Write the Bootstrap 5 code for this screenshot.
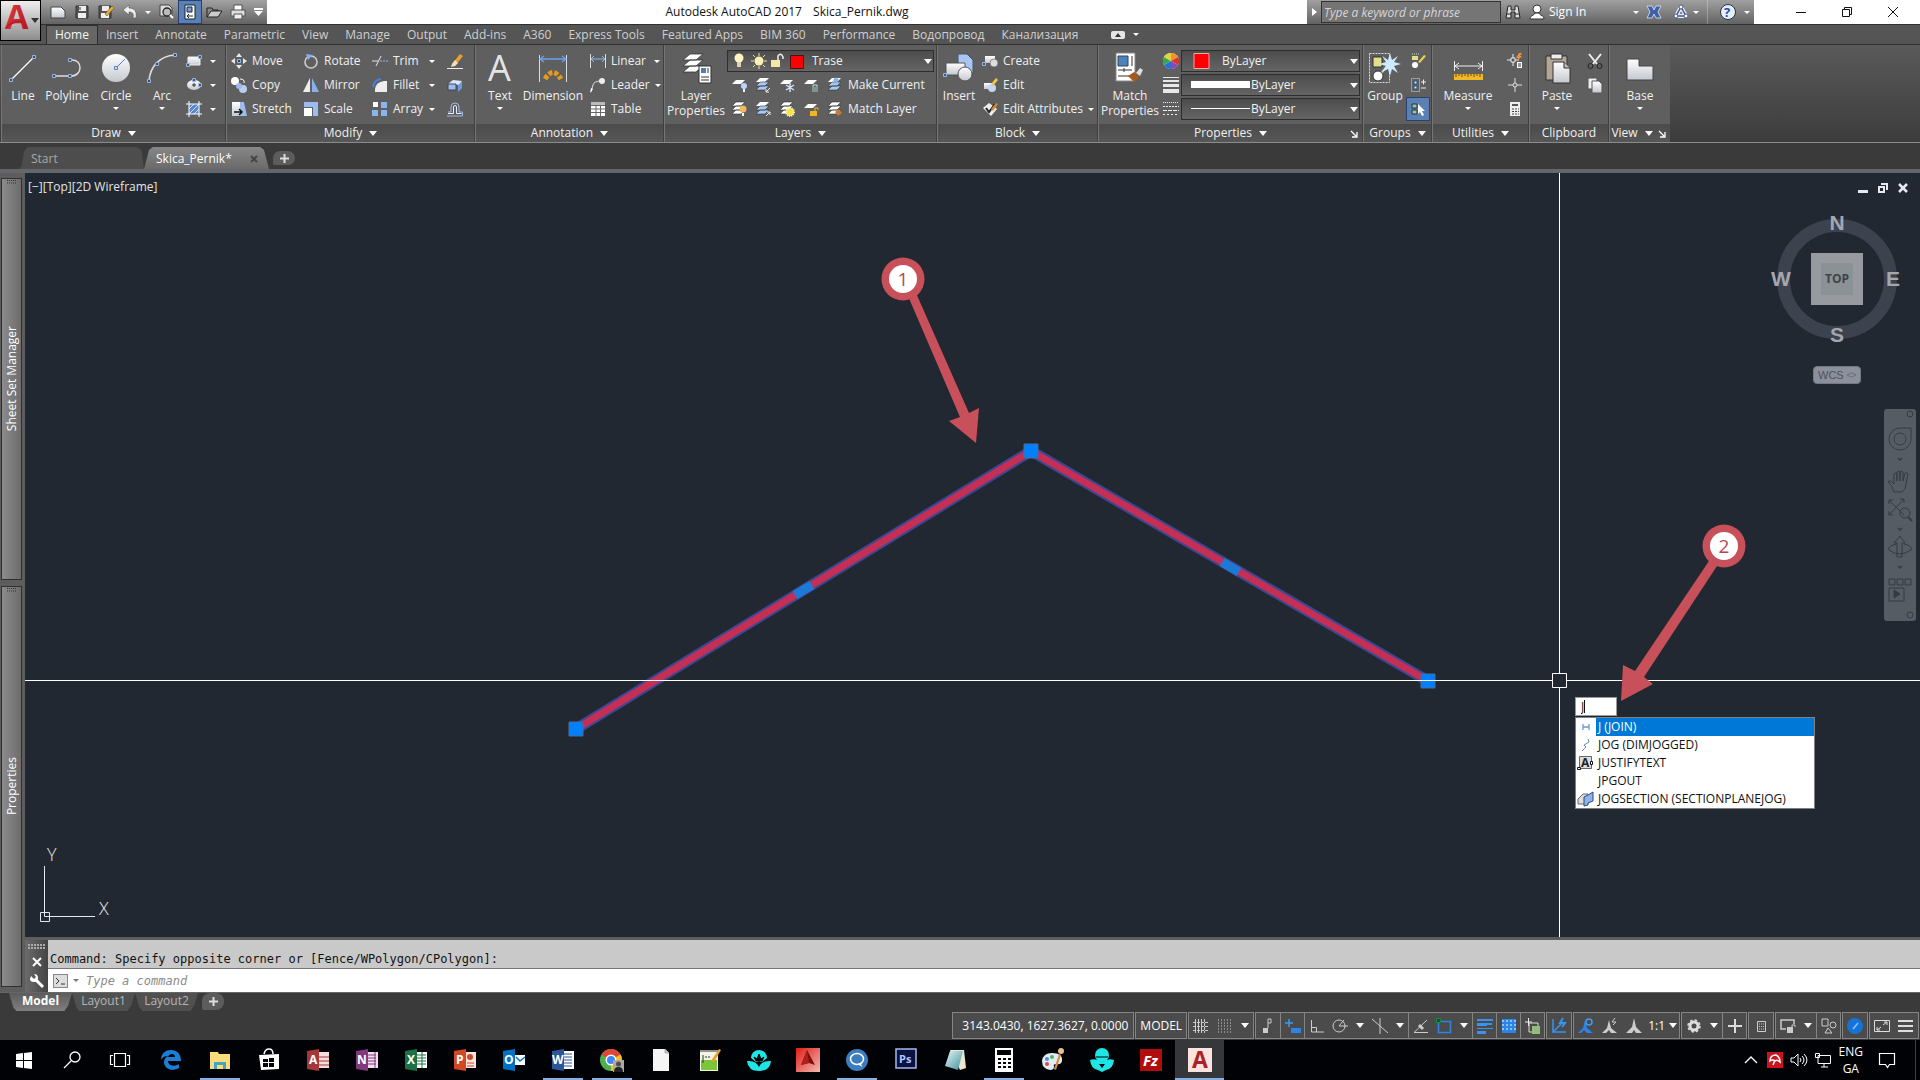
<!DOCTYPE html>
<html lang="en">
<head>
<meta charset="utf-8">
<meta name="viewport" content="width=device-width, initial-scale=1">
<title>Autodesk AutoCAD 2017 - Skica_Pernik.dwg</title>
<link href="https://cdn.jsdelivr.net/npm/bootstrap@5.3.0/dist/css/bootstrap.min.css" rel="stylesheet">
<style>
:root{--ui:"Open Sans","Noto Sans",sans-serif}
body{font-family:var(--ui);font-size:12px;line-height:16px;background:#3a3a3b;color:#f0f0f0;overflow-x:hidden}
button,select,input{font:inherit;color:inherit;background:none;border:0;padding:0;border-radius:0}
a{color:inherit;text-decoration:none}
svg{flex:none;display:block;overflow:visible}
svg text{font-family:"Open Sans",sans-serif}
.caret{flex:none;width:0;height:0;border:4px solid transparent;border-top:5px solid #fff;border-bottom:0}
.caret-s{border-width:3px;border-top-width:3px}
.ic{width:16px;height:16px}
.ibtn{display:flex;align-items:center;justify-content:center;width:24px;height:24px;flex:none}
/* title bar */
.titlebar{height:24px;background:#fff;color:#111}
.appbtn{position:absolute;left:0;top:0;width:41px;height:41px;background:linear-gradient(#eee,#8d8d8d);border:1px solid #000;z-index:5}
.qat{margin-left:41px;padding-left:5px;width:226px;background:linear-gradient(#a2a2a2,#636363)}
.qat-on{background:#5b80b4;border:1px solid #27426e}
.info-bar{background:linear-gradient(#a0a0a0,#636363);width:447px;color:#fff}
.kw{width:180px;height:22px;background:#757575;border:1px solid #333;font-style:italic;padding-left:2px}
.kw::placeholder{color:#d5d5d5;opacity:1}
.winbtn{width:46px;height:24px}
/* ribbon */
.ribbon-tabs{height:20px;background:#555556;border-top:1px solid #303030;padding-left:46px;color:#cfcfcf}
.ribbon-tabs a{padding:0 8px 0 7px;line-height:18px;border:1px solid transparent;border-bottom:0;white-space:nowrap}
.ribbon-tabs a.on{background:#666;border-color:#2e2e2e;color:#f5f5f5;padding:0 8px}
.ribbon{height:99px;background:linear-gradient(#5a5a5a,#3c3c3c);border-top:1px solid #303030;border-bottom:1px solid #8b8b8b;padding-left:1px}
.pnl{display:flex;flex-direction:column;background:#5f5f60;border-right:1px solid #404040;border-left:1px solid #757575;flex:none}
.pnl-body{flex:1;display:flex;padding-top:4px}
.pnl-title{height:18px;background:linear-gradient(#4b4b4b,#575757);display:flex;align-items:center;justify-content:center;gap:7px;position:relative}
.launch{position:absolute;right:4px;top:6px}
.big{display:flex;flex-direction:column;align-items:center;flex:none;line-height:15px;padding-top:3px}
.big svg{width:32px;height:32px;margin-bottom:4px}
.big .caret{margin-top:4px}
.rows{display:flex;flex-direction:column;flex:none}
.rb{display:flex;align-items:center;height:24px;gap:5px;white-space:nowrap}
.rb .caret{margin-left:auto}
.combo{display:flex;align-items:center;height:22px;margin:1px 0;background:linear-gradient(#4d4d4d,#646464);border:1px solid #2d2d2d;position:relative}
.combo select{appearance:none;flex:1;min-width:0;height:20px}
.combo .caret{position:absolute;right:1px;pointer-events:none}
.combos{margin-right:2px}
.w-draw{width:225px}.w-modify{width:249px}.w-annot{width:189px}.w-layers{width:273px}.w-block{width:161px}
.w-props{width:265px}.w-groups{width:69px}.w-utils{width:97px}.w-clip{width:80px}.w-view{width:61px}
/* file tabs */
.filetabs{height:26px;background:#3a3a3a;padding:4px 0 0 19px}
.ftab{height:22px;width:125px;padding:2px 14px 0 12px;display:flex;align-items:center;background:#4d4d4d;color:#a9a9a9;
clip-path:polygon(0 100%,2% 88%,4% 20%,7% 0,94% 0,98% 14%,100% 100%)}
.ftab.on{background:linear-gradient(#878787,#6a6a6a);color:#fff;padding-right:11px;clip-path:polygon(0 100%,4% 14%,7% 0,93% 0,96% 14%,100% 100%)}
.plus-tab{width:22px;height:14px;background:#5c5c5c;border-radius:8px 8px 8px 2px;display:flex;align-items:center;justify-content:center}
.rule{height:4px;background:#66656b;flex:none}
/* work area */
.side{width:25px;background:#5d5d5e;padding:5px 2px 5px 1px;gap:6px;flex:none}
.palette{flex:1;width:21px;border:1px solid #2f2f2f;background:linear-gradient(90deg,#8c8c8c,#6c6c6c);color:#fff;position:relative;
display:flex;align-items:center;justify-content:center}
.palette span{writing-mode:vertical-rl;transform:rotate(180deg);white-space:nowrap}
.palette svg{position:absolute;top:1px;left:5px}
.model{background:#212831;position:relative;flex:1;min-height:640px;overflow:hidden}
.drawing{position:absolute;left:0;top:0;width:100%;height:100%}
.vlabel{position:absolute;left:3px;top:6px;color:#e4e4e4}
.vpbtns{position:absolute;right:12px;top:10px;display:flex;gap:10px}
.viewcube{position:absolute;right:18px;top:36px}
.ucs{position:absolute;left:10px;bottom:10px}
.wcs{position:absolute;right:59px;top:193px;width:48px;height:18px;border-radius:4px;background:#8b909c;border:1px solid #737882;color:#4d525b;
font-family:"Liberation Sans",sans-serif;font-size:11px;line-height:14px;display:flex;align-items:center;justify-content:space-between;padding:0 4px}
.navbar-v{position:absolute;right:4px;top:236px;width:32px;height:212px;border-radius:3px;background:#565c64}
.dyn{position:absolute;left:1550px;top:524px;width:240px;color:#111}
.dyn input{display:block;width:42px;height:19px;background:#fff;padding-left:5px;border:1px solid #999;line-height:16px}
.dyn-cursor{position:absolute;left:9px;top:3px;width:1px;height:13px;background:#111}
.dyn ul{border:1px solid #808080;background:#fff;margin:1px 0 0}
.dyn li{height:18px;display:flex;align-items:center;line-height:18px}
.dyn li svg{width:20px;height:18px}
.dyn li span{flex:1;padding-left:2px;white-space:nowrap}
.dyn li.sel span{background:#0078d7;color:#fff}
/* command line */
.cmd{border-top:3px solid #5d5d60;font-family:"DejaVu Sans Mono","Liberation Mono",monospace;color:#111;flex:none}
.cmd-grip{width:23px;background:linear-gradient(90deg,#6b6b6b,#444)}
.cmd-hist{height:29px;background:#c9c9c9;border-bottom:1px solid #777;padding:11px 2px 0;line-height:16px}
.cmd-in{height:23px;background:#fff;padding-left:5px;gap:5px}
.cmd-in input{font-style:italic;padding-left:2px}
.cmd-in input::placeholder{color:#8b8b8b;opacity:1}
/* layout tabs and status bar */
.laytabs{height:20px;border-top:1px solid #666;padding-left:9px;color:#b5b5b5}
.ltab{height:18px;width:63px;background:#505050;line-height:16px;padding-bottom:2px;text-align:center;clip-path:polygon(0 0,100% 0,94% 70%,88% 100%,12% 100%,7% 80%)}
.ltab.on{background:linear-gradient(#5c5c5c,#7f7f7f);color:#fff;font-weight:700}
.status{height:28px;padding:0 1px 1px 0;gap:1px}
.sg{display:flex;align-items:center;height:27px;border:1px solid #858585;background:#4b4b4c;color:#fff}
.sg .ibtn{height:25px}
.sg .ibtn+.cell,.cell+.cell{border-left:1px solid #858585}
.sg .sm{width:16px}
.scale-btn{display:flex;align-items:center;gap:4px;padding:0 2px}
.coord{width:182px;padding-right:5px;justify-content:flex-end}
/* taskbar */
.taskbar{height:40px;background:#010206;color:#fff}
.tk{width:49px;height:40px;display:flex;align-items:center;justify-content:center;position:relative;flex:none}
.tk.sys{width:48px}
.tk.sys+.tk:not(.sys){margin-left:2px}
.tk svg{width:24px;height:24px}
.tk.run::after{content:"";position:absolute;left:5px;right:4px;bottom:0;height:2px;background:#84b0e4}
.tk.act{background:#36373b}
.tk.act::after{left:0;right:0}
.tray{padding-right:4px}
</style>
</head>
<body>
<svg width="0" height="0" class="position-absolute" aria-hidden="true">
<defs>
<linearGradient id="gw" x2="0" y2="1"><stop stop-color="#fff"/><stop offset="1" stop-color="#c4c8cf"/></linearGradient>
<linearGradient id="gr" x1="0" x2="1" y2="1"><stop stop-color="#e01c14"/><stop offset="1" stop-color="#f3b9b4"/></linearGradient>
<linearGradient id="gt" x2="1" y2="1"><stop stop-color="#e4f6f4"/><stop offset="1" stop-color="#3f8f9c"/></linearGradient>
<linearGradient id="ga" x2="1" y2="1"><stop stop-color="#e8434a"/><stop offset="1" stop-color="#a81218"/></linearGradient>
<symbol id="stack" viewBox="0 0 16 16"><path d="M5 1h9l-4 4H1zM5 5h9l-4 4H1zM5 9h9l-4 4H1z" fill="#fff" stroke="#333" stroke-width=".6"/></symbol>
<symbol id="stackb" viewBox="0 0 16 16"><path d="M5 1h9l-4 4H1z" fill="#fff"/><path d="M5 5h9l-4 4H1zM5 9h9l-4 4H1z" fill="#a9c9f5" stroke="#333" stroke-width=".6"/></symbol>
<symbol id="one" viewBox="0 0 16 16"><path d="M5 3h9l-4 4H1z" fill="#fff"/></symbol>
<symbol id="office" viewBox="0 0 24 24"><path d="M1 3 13 1v22L1 21z"/></symbol>
</defs>
</svg>
<div class="d-flex flex-column min-vh-100">
<header>
<div class="titlebar d-flex align-items-stretch">
  <button class="appbtn d-flex align-items-center justify-content-center" aria-label="Application menu">
    <svg width="39" height="39"><text x="4" y="28" font-size="34" font-weight="700" fill="url(#ga)">A</text><path d="M5 27q6-8 19-6" fill="none" stroke="#c01a20" stroke-width="2"/><path d="M30 17h8l-4 5z" fill="#333"/></svg>
  </button>
  <div class="qat d-flex align-items-center">
    <button class="ibtn" aria-label="New"><svg class="ic"><path d="M1 3h10l4 4v7H1z" fill="url(#gw)" stroke="#444"/></svg></button>
    <button class="ibtn" aria-label="Save"><svg class="ic"><path d="M2 2h12v12H2z" fill="#555" stroke="#333"/><path d="M5 2h7v5H5zM4 9h8v5H4z" fill="#eee"/><path d="M6 3v3" stroke="#333"/></svg></button>
    <button class="ibtn" aria-label="Save as"><svg class="ic"><path d="M1 2h12v12H1z" fill="#555" stroke="#333"/><path d="M4 2h7v5H4zM3 9h8v5H3z" fill="#eee"/><path d="m7 10 7-8 2 2-7 8z" fill="#e9b340" stroke="#7a4b12" stroke-width=".6"/></svg></button>
    <button class="ibtn" aria-label="Undo"><svg class="ic"><path d="m1 6 6-5v3c6 0 8 4 7 10h-3c1-4 0-6-4-6v3z" fill="#eee" stroke="#555" stroke-width=".6"/></svg></button>
    <button class="ibtn" style="width:12px" aria-label="Undo list"><span class="caret caret-s"></span></button>
    <button class="ibtn" aria-label="Plot preview"><svg class="ic"><path d="M2 1h9l3 3v8H2z" fill="#ddd" stroke="#444"/><circle cx="9" cy="8" r="4" fill="#bbb" stroke="#222" stroke-width="1.3"/><path d="m12 11 3 3" stroke="#fff" stroke-width="2"/></svg></button>
    <button class="ibtn qat-on" aria-label="Properties"><svg class="ic"><path d="M3 1h10v14H3z" fill="#fff" stroke="#123"/><path d="M5 3h5v5H5z" fill="#6da0d6" stroke="#223"/><path d="M5 12h6M7 10l-2 2 2 2" stroke="#223" fill="none"/></svg></button>
    <button class="ibtn" aria-label="Open"><svg class="ic"><path d="M1 13V4h5l1 2h5v2H6z" fill="#888" stroke="#222"/><path d="m1 13 4-6h11l-4 6z" fill="#ccc" stroke="#222"/></svg></button>
    <button class="ibtn" aria-label="Plot"><svg class="ic"><path d="M4 1h8v6H4z" fill="#fff" stroke="#555"/><path d="M1 6h14v6H1z" fill="#ddd" stroke="#555"/><path d="M4 10h8v5H4z" fill="#eee" stroke="#555"/></svg></button>
    <button class="ibtn" style="width:16px" aria-label="Customize"><svg width="9" height="8"><path d="M0 0h9v2H0zM0 3h9L4.500 8z" fill="#fff"/></svg></button>
  </div>
  <div class="flex-fill d-flex align-items-center justify-content-center text-nowrap gap-2"><span>Autodesk AutoCAD 2017</span><span>&nbsp;Skica_Pernik.dwg</span></div>
  <div class="info-bar d-flex align-items-center">
    <button class="ibtn" style="width:14px" aria-label="Collapse"><svg width="5" height="8"><path d="M0 0l5 4-5 4z" fill="#fff"/></svg></button>
    <input class="kw" aria-label="Search" placeholder="Type a keyword or phrase">
    <button class="ibtn" aria-label="Search"><svg class="ic"><path d="M3 2h3v4h4V2h3l2 12h-5V8H6v6H1z" fill="#ddd" stroke="#222"/><path d="M2 10h4M10 10h4" stroke="#222"/></svg></button>
    <button class="d-flex align-items-center gap-1 flex-fill ps-1" aria-label="Sign In"><svg class="ic"><circle cx="8" cy="5" r="4" fill="#fff" stroke="#333"/><path d="M1 15c0-4 4-3 5-6h4c1 3 5 2 5 6z" fill="#fff" stroke="#333"/></svg><span>Sign In</span><span class="caret caret-s ms-auto"></span></button>
    <button class="ibtn" style="width:30px" aria-label="Exchange apps"><svg class="ic"><path d="M1 2h5l2 4 2-4h5l-3 6 3 6h-5l-2-4-2 4H1l3-6z" fill="#3f5fa8" stroke="#e0e6f4" stroke-width=".8"/></svg></button>
    <button class="ibtn" aria-label="A360"><svg class="ic"><path d="m8 3 5 9H3z" fill="none" stroke="#e8ecf6" stroke-width="4" stroke-linejoin="round"/><path d="m8 3 5 9H3z" fill="none" stroke="#44568c" stroke-width="1.500"/><g fill="#fff" stroke="#44568c"><circle cx="8" cy="3" r="2"/><circle cx="3" cy="12" r="2"/><circle cx="13" cy="12" r="2"/></g></svg></button>
    <span class="caret caret-s"></span>
    <span class="vr mx-2"></span>
    <button class="ibtn" aria-label="Help"><svg class="ic"><circle cx="8" cy="8" r="7.500" fill="#e7eefb" stroke="#333"/><text x="4" y="13" font-size="13" font-weight="700" fill="#1c4fb4">?</text></svg></button>
    <span class="caret caret-s mx-1"></span>
  </div>
  <div class="d-flex ps-4 pe-1">
    <button class="winbtn ibtn" aria-label="Minimize"><svg width="10" height="10"><path d="M0 5.500h10" stroke="#111"/></svg></button>
    <button class="winbtn ibtn" aria-label="Restore"><svg width="10" height="10"><path d="M.5 2.500h7v7h-7zM2.500 2.500v-2h7v7h-2" fill="none" stroke="#111"/></svg></button>
    <button class="winbtn ibtn" aria-label="Close"><svg width="10" height="10"><path d="m0 0 10 10M10 0 0 10" stroke="#111"/></svg></button>
  </div>
</div>
<nav class="ribbon-tabs d-flex">
  <a href="#" class="on">Home</a><a href="#">Insert</a><a href="#">Annotate</a><a href="#">Parametric</a><a href="#">View</a><a href="#">Manage</a><a href="#">Output</a><a href="#">Add-ins</a><a href="#">A360</a><a href="#">Express Tools</a><a href="#">Featured Apps</a><a href="#">BIM 360</a><a href="#">Performance</a><a href="#">Водопровод</a><a href="#">Канализация</a>
  <button class="d-flex align-items-center gap-2 ms-4" aria-label="Ribbon display"><svg width="14" height="8"><rect width="14" height="8" rx="2" fill="#e6e6e6"/><path d="m4 6 3-4 3 4z" fill="#333"/></svg><span class="caret caret-s"></span></button>
</nav>
<div class="ribbon d-flex">
  <section class="pnl w-draw"><div class="pnl-body">
    <button class="big" style="width:42px"><svg><path d="M4 28 27 5" stroke="#fff" stroke-width="1.300"/><g fill="#4a4a4a" stroke="#8fb7f2"><path d="M2.500 26.500h3v3h-3zM25.500 3.500h3v3h-3z"/></g></svg>Line</button>
    <button class="big" style="width:46px"><svg><path d="M3 24h17c12 0 12-17 0-16" fill="none" stroke="#ddd" stroke-width="1.500"/><g fill="#4a4a4a" stroke="#8fb7f2"><path d="M1.500 22.500h3v3h-3zM17.500 22.500h3v3h-3zM17.500 6.500h3v3h-3z"/></g></svg>Polyline</button>
    <button class="big" style="width:52px"><svg><circle cx="16" cy="16" r="14" fill="url(#gw)"/><path d="m16 16 9-9" stroke="#4d7fd0"/><path d="M14.500 14.500h3v3h-3z" fill="#dde" stroke="#4d7fd0"/></svg>Circle<span class="caret caret-s"></span></button>
    <button class="big" style="width:40px"><svg><path d="M3 29C4 15 13 4 29 3" fill="none" stroke="#ddd" stroke-width="1.500"/><g fill="#4a4a4a" stroke="#8fb7f2"><path d="M1.500 27.500h3v3h-3zM9.500 10.500h3v3h-3zM27.500 1.500h3v3h-3z"/></g></svg>Arc<span class="caret caret-s"></span></button>
    <div class="rows ps-1">
      <button class="rb" style="width:30px" aria-label="Rectangle"><svg class="ic"><path d="M2 4h12v8H2z" fill="url(#gw)" stroke="#eee"/><path d="M.5 10.500h3v3h-3zM12.500 2.500h3v3h-3z" fill="#555" stroke="#8fb7f2"/></svg><span class="caret caret-s"></span></button>
      <button class="rb" style="width:30px" aria-label="Ellipse"><svg class="ic"><ellipse cx="8" cy="8" rx="7" ry="5" fill="url(#gw)"/><path d="M8 6v4M6 8h4" stroke="#333"/><path d="M6.500 1.500h3v3h-3zM12.500 6.500h3v3h-3z" fill="#555" stroke="#8fb7f2"/></svg><span class="caret caret-s"></span></button>
      <button class="rb" style="width:30px" aria-label="Hatch"><svg class="ic"><path d="M3 3h10v10H3z" fill="#5b86cf"/><path d="m3 13 10-10M3 8l5-5M8 13l5-5" stroke="#cfe0fa"/><path d="M0 3h16M0 13h16M3 0v16M13 0v16" stroke="#fff"/></svg><span class="caret caret-s"></span></button>
    </div></div><div class="pnl-title">Draw<span class="caret"></span></div></section>

  <section class="pnl w-modify"><div class="pnl-body ps-1">
    <div class="rows" style="width:72px">
      <button class="rb"><svg class="ic"><path d="m8 0 3 4H5zM8 16l3-4H5zM0 8l4-3v6zM16 8l-4-3v6z" fill="#e8e8e8"/><path d="M6.500 6.500h3v3h-3z" fill="#444" stroke="#8fb7f2"/></svg>Move</button>
      <button class="rb"><svg class="ic"><circle cx="4" cy="4" r="4" fill="#fff"/><circle cx="12" cy="12" r="4" fill="#b9cdf0"/><circle cx="8" cy="9" r="3" fill="#9db9e8"/><path d="M9 2q5 0 4 4" stroke="#fff" fill="none"/></svg>Copy</button>
      <button class="rb"><svg class="ic"><path d="M9 1h4l3 14H9z" fill="#9cbcf0"/><path d="M1 1h8v14H1z" fill="url(#gw)"/><path d="M3 11h7M8 8l3 3-3 3" stroke="#111" stroke-width="1.500" fill="none"/></svg>Stretch</button></div>
    <div class="rows" style="width:69px">
      <button class="rb"><svg class="ic"><circle cx="8" cy="9" r="6" fill="none" stroke="#ccc" stroke-width="1.600"/><path d="m3 1 7 1-5 5z" fill="#86aff0"/></svg>Rotate</button>
      <button class="rb"><svg class="ic"><path d="M7 1v14H0z" fill="#eee"/><path d="M9 1v14h7z" fill="#8ab0ea"/></svg>Mirror</button>
      <button class="rb"><svg class="ic"><path d="M1 1h14v14h-5V6H1z" fill="#9cbcf0"/><path d="M1 7h8v8H1z" fill="#fff"/></svg>Scale</button></div>
    <div class="rows" style="width:63px">
      <button class="rb"><svg class="ic"><path d="M0 8h6M4 13l5-10" stroke="#e8e8e8"/><path d="M8 8h2m1 0h2m1 0h2" stroke="#8fb7f2"/></svg>Trim<span class="caret caret-s"></span></button>
      <button class="rb"><svg class="ic"><path d="M3 15V12Q4 5 12 4h3v11z" fill="#eee"/><path d="M1 10Q2 3 9 2" stroke="#4a7fd8" fill="none" stroke-width="2"/></svg>Fillet<span class="caret caret-s"></span></button>
      <button class="rb"><svg class="ic"><path d="M1 1h5v5H1z" fill="#fff"/><path d="M9 1h6v6H9zM0 9h6v6H0zM9 9h6v6H9z" fill="#8ab6ee"/></svg>Array<span class="caret caret-s"></span></button></div>
    <div class="rows ps-2 ms-1">
      <button class="rb" aria-label="Erase"><svg class="ic"><path d="m5 11 8-10 3 2-8 10z" fill="#e8a02c"/><path d="m5 11 3-4 3 3-3 3-4 1z" fill="#f3e0bb"/><path d="M0 15.500h16" stroke="#eee"/></svg></button>
      <button class="rb" aria-label="Explode"><svg class="ic"><path d="m1 7 5-4 9 1-3 4z" fill="#dbe8fb"/><path d="M1 7h8v6H1z" fill="#9cbcf0" stroke="#445"/><path d="m11 8 4-3v6l-4 4z" fill="#6b9be0"/></svg></button>
      <button class="rb" aria-label="Offset"><svg class="ic"><path d="M0 15h15.500v-4H12V6a4 4 0 0 0-8 0v5H1" fill="none" stroke="#9cbcf0"/><path d="M1 12.500h5.500V6a1.500 1.500 0 0 1 3 0v6.500h5" fill="none" stroke="#eee"/></svg></button></div>
  </div><div class="pnl-title">Modify<span class="caret"></span></div></section>

  <section class="pnl w-annot"><div class="pnl-body">
    <button class="big" style="width:48px"><svg><text x="4" y="29" font-size="36" fill="#e4e4e4">A</text></svg>Text<span class="caret caret-s"></span></button>
    <button class="big" style="width:58px"><svg><path d="M2.500 3v27M29.500 3v27" stroke="#ddd"/><path d="M3 7h26M7 4 3 7l4 3M25 4l4 3-4 3" stroke="#6f9fee" fill="none" stroke-width="1.300"/><path d="M8 27q8-13 16 0" fill="none" stroke="#e59a20" stroke-width="5" stroke-dasharray="4 2"/></svg>Dimension</button>
    <div class="rows ps-2" style="width:78px">
      <button class="rb"><svg class="ic"><path d="M.5 1v14M15.500 1v14" stroke="#ddd"/><path d="M1 6h14M4 3 1 6l3 3M12 3l3 3-3 3" stroke="#8fb7f2" fill="none"/></svg>Linear<span class="caret caret-s"></span></button>
      <button class="rb"><svg class="ic"><path d="M1 15 3 8q1-4 8-4" stroke="#ddd" fill="none"/><path d="m0 16 1-5 2 1z" fill="#fff"/><circle cx="12" cy="4" r="3" fill="#eee"/></svg>Leader<span class="caret caret-s"></span></button>
      <button class="rb"><svg class="ic"><path d="M1 1h14v14H1z" fill="#fff"/><path d="M1 1h14v3H1z" fill="#bbb"/><path d="M1 4.500h14M1 8h14M1 11.500h14M6 4v11M10.500 4v11" stroke="#666"/></svg>Table</button></div>
  </div><div class="pnl-title">Annotation<span class="caret"></span></div></section>

  <section class="pnl w-layers"><div class="pnl-body">
    <button class="big" style="width:62px"><svg><path d="M10 2h13l-7 6H3zM10 8h13l-7 6H3zM10 14h13l-7 6H3z" fill="#fff" stroke="#333" stroke-width=".8"/><path d="M19 14h12v17H19z" fill="#fff" stroke="#333"/><path d="M21 16h5v5h-5z" fill="#4f7db8"/><path d="M21 25h8M21 28h8M28 16v5" stroke="#333"/></svg>Layer<br>Properties</button>
    <div class="rows flex-fill combos">
      <div class="combo"><svg width="76" height="20"><circle cx="11" cy="7" r="4.500" fill="#fdf3c4"/><path d="M9 11h4v5H9z" fill="#ddd6b0"/><circle cx="31" cy="10" r="4.500" fill="#fbf0b5"/><path d="M31 2v3M31 15v3M23 10h3M36 10h3M25 4l2 2M35 14l2 2M25 16l2-2M35 6l2-2" stroke="#eee0a0"/><path d="M43 9h9v7h-9z" fill="#f6e7a2"/><path d="M50 9V5q3-4 5 1v2" fill="none" stroke="#eee" stroke-width="1.500"/><path d="M62.500 4.500h13v13h-13z" fill="#f00" stroke="#501010"/></svg><select class="ps-2" aria-label="Layer"><option>Trase</option></select><span class="caret"></span></div>
      <div class="rb ps-1" style="gap:8px"><svg class="ic"><use href="#one"/><circle cx="13" cy="9" r="3" fill="#bcd6fa"/><path d="M12 12h2v3h-2z" fill="#fff"/></svg><svg class="ic"><use href="#stackb"/><path d="m15 11-4 4m0-3v3h3" stroke="#eee" fill="none"/></svg><svg class="ic"><use href="#one"/><path d="M11 6v9M7 8l8 5M15 8l-8 5" stroke="#d5e6ff" stroke-width="1.400"/></svg><svg class="ic"><use href="#one"/><path d="M9 10h6v5H9z" fill="#7c9a8c"/><path d="M10 10V8h4v2" fill="none" stroke="#cde"/></svg><button class="rb"><svg class="ic"><use href="#stackb"/><circle cx="9" cy="3" r="2.500" fill="#8ab6ee"/></svg>Make Current</button></div>
      <div class="rb ps-1" style="gap:8px"><svg class="ic"><use href="#stack"/><circle cx="12" cy="8" r="3.500" fill="#f3b960"/><path d="M11 12h2v3h-2z" fill="#fff"/></svg><svg class="ic"><use href="#stackb"/><path d="m11 15 4-4m-3 0h3v3" stroke="#eee" fill="none"/></svg><svg class="ic"><use href="#stack"/><circle cx="11" cy="11" r="4" fill="#f5e14e" stroke="#fff8b0" stroke-dasharray="1 1" stroke-width="2"/></svg><svg class="ic"><use href="#one"/><path d="M7 10h7v5H7z" fill="#f0b429"/><path d="M12 10V7h3v2" fill="none" stroke="#f0b429"/></svg><button class="rb"><svg class="ic"><use href="#stack"/><path d="m8 11 4-3 3 4-4 3z" fill="#c77a33"/></svg>Match Layer</button></div>
    </div></div><div class="pnl-title">Layers<span class="caret"></span></div></section>

  <section class="pnl w-block"><div class="pnl-body">
    <button class="big" style="width:42px"><svg><path d="M15 2h9l6 6v13H15z" fill="#a9c6f2" stroke="#456"/><path d="M3 11h19v12H3z" fill="url(#gw)" stroke="#555"/><circle cx="22" cy="22" r="7" fill="url(#gw)" stroke="#555"/><path d="M.5 21.500h3v3h-3z" fill="#555" stroke="#8fb7f2"/></svg>Insert</button>
    <div class="rows" style="width:113px;padding-left:2px">
      <button class="rb"><svg class="ic"><path d="M3 3h10v7H3z" fill="url(#gw)"/><circle cx="12" cy="10" r="4" fill="#ddd" stroke="#555" stroke-width=".6"/><path d="M.5 9.500h3v3h-3z" fill="#555" stroke="#8fb7f2"/></svg>Create</button>
      <button class="rb"><svg class="ic"><path d="M2 6h9v6H2z" fill="url(#gw)"/><circle cx="10" cy="11" r="4" fill="#c5d6f2"/><path d="m9 7 5-6 2 2-5 6z" fill="#f2c54b"/></svg>Edit</button>
      <button class="rb"><svg class="ic"><path d="m1 7 6-5 8 6-6 7z" fill="#eee"/><path d="m4 7 3 4 6-8" stroke="#222" stroke-width="2" fill="none"/><path d="m9 8 5-6 2 1-5 7z" fill="#d58c38"/></svg>Edit Attributes<span class="caret caret-s"></span></button></div>
  </div><div class="pnl-title">Block<span class="caret"></span></div></section>

  <section class="pnl w-props"><div class="pnl-body">
    <button class="big" style="width:62px"><svg><path d="M2 1h19v28H2z" fill="#fff" stroke="#888"/><path d="M4 4h10v10H4z" fill="#4c83bd" stroke="#345"/><path d="M18 4v10M4 18h14M4 24h12M10 16v4" stroke="#333"/><path d="m14 24 6-4 6 5-6 5z" fill="#a35a20"/><path d="m22 21 4-5 3 2-3 6z" fill="#ddd"/></svg>Match<br>Properties</button>
    <div class="rows align-items-center" style="width:20px">
      <span class="rb"><svg class="ic"><circle cx="8" cy="8" r="8" fill="#eee"/><path d="M8 8V0a8 8 0 0 1 7 4z" fill="#f0932c"/><path d="m8 8 7-4a8 8 0 0 1 0 8z" fill="#d9372b"/><path d="m8 8 7 4a8 8 0 0 1-7 4z" fill="#8a49b8"/><path d="M8 8v8a8 8 0 0 1-7-4z" fill="#2c6fd3"/><path d="m8 8-7 4a8 8 0 0 1 0-8z" fill="#36a852"/><path d="M8 8 1 4a8 8 0 0 1 7-4z" fill="#e4d43c"/></svg></span>
      <span class="rb"><svg class="ic"><path d="M0 0h16v1H0zM0 3h16v2H0zM0 7h16v3H0zM0 12h16v4H0z" fill="#e8e8e8"/></svg></span>
      <span class="rb"><svg class="ic"><path d="M0 1.500h16" stroke="#eee" stroke-dasharray="1 1"/><path d="M0 5.500h16" stroke="#eee" stroke-dasharray="2 1"/><path d="M0 9.500h16" stroke="#eee" stroke-dasharray="4 1"/><path d="M0 13.500h16" stroke="#eee" stroke-dasharray="2 2"/></svg></span></div>
    <div class="rows flex-fill combos">
      <div class="combo"><svg width="28" height="20"><path d="M12 2.500h15v15H12z" fill="#f00" stroke="#eaa"/></svg><select class="ps-2 ms-1" aria-label="Color"><option>ByLayer</option></select><span class="caret"></span></div>
      <div class="combo"><svg width="69" height="20"><path d="M9 6h59v7H9z" fill="#fff"/></svg><select aria-label="Lineweight"><option>ByLayer</option></select><span class="caret"></span></div>
      <div class="combo"><svg width="69" height="20"><path d="M9 9.500h59" stroke="#fff"/></svg><select aria-label="Linetype"><option>ByLayer</option></select><span class="caret"></span></div></div>
  </div><div class="pnl-title">Properties<span class="caret"></span><svg class="launch" width="8" height="8"><path d="m1 1 5 5M7 2v5H2" stroke="#fff" fill="none" stroke-width="1.300"/></svg></div></section>

  <section class="pnl w-groups"><div class="pnl-body">
    <button class="big" style="width:42px"><svg><path d="M.5 1.500h20v29H.5z" fill="none" stroke="#ddd" stroke-dasharray="2 1"/><path d="M4 5h9v10H4z" fill="#dfe08c" stroke="#333"/><path d="m10 24 8-10" stroke="#ccc" stroke-width="2"/><circle cx="9" cy="24" r="5" fill="#fff" stroke="#333"/><path d="m21 1 2 7 6-4-4 6 7 2-7 2 4 7-6-4-2 7-2-7-6 3 4-6-7-2 7-2-4-6 6 4z" fill="#cdeaff"/></svg>Group</button>
    <div class="rows">
      <button class="ibtn" aria-label="Edit group"><svg class="ic"><path d="M2 1h7" stroke="#ddd" stroke-dasharray="1 1"/><path d="M2 3h6v4H2z" fill="#dfe08c"/><circle cx="5" cy="12" r="3" fill="#fff"/><path d="m8 9 6-7 2 1-6 7z" fill="#e8d050"/></svg></button>
      <button class="ibtn" aria-label="Ungroup"><svg class="ic"><path d="M1.500 1.500h8v13h-8z" fill="none" stroke="#ddd" stroke-dasharray="1 1"/><path d="M4 4h3v3H4zM4 9h3v3H4z" fill="#e5e5e5" stroke="#258"/><path d="M11 5h5M13.500 2.500v5M11 11h5" stroke="#eee"/></svg></button>
      <button class="ibtn qat-on" aria-label="Group selection"><svg class="ic"><path d="M2 3h5v4H2zM2 9h5v4H2z" fill="#9cc39b" stroke="#234"/><path d="m8 3 7 7h-3l2 4-2 1-2-4-2 2z" fill="#fff"/></svg></button></div>
  </div><div class="pnl-title">Groups<span class="caret"></span></div></section>

  <section class="pnl w-utils"><div class="pnl-body">
    <button class="big" style="width:70px"><svg><path d="M2.500 9v10M30.500 9v10M3 14h27M7 11l-4 3 4 3M26 11l4 3-4 3" stroke="#eee" fill="none"/><path d="M2 22h29v6H2z" fill="#f1b828"/><path d="M4 22v3M7 22v2M10 22v3M13 22v2M16 22v3M19 22v2M22 22v3M25 22v2M28 22v3" stroke="#6a4a08"/></svg>Measure<span class="caret caret-s"></span></button>
    <div class="rows">
      <button class="ibtn" aria-label="Quick select"><svg class="ic"><path d="M6 1v12M0 7h12" stroke="#eee"/><path d="M4 5h4v4H4z" fill="#555" stroke="#eee"/><path d="m12 0-3 5h2l-1 3 5-5h-2l2-3z" fill="#e8923c"/><path d="M10 9h5v6h-5z" fill="#fff"/><path d="M11 11h3M11 13h3" stroke="#333"/></svg></button>
      <button class="ibtn" aria-label="Point"><svg class="ic"><path d="M8 1v14M1 8h14" stroke="#ddd"/><circle cx="8" cy="8" r="2" fill="#666" stroke="#ddd"/></svg></button>
      <button class="ibtn" aria-label="Calculator"><svg class="ic"><path d="M3 1h10v14H3z" fill="#eee"/><path d="M5 3h6v2H5z" fill="#555"/><path d="M5 8h7M5 10.500h7M5 13h7" stroke="#444" stroke-dasharray="2 1"/></svg></button></div>
  </div><div class="pnl-title">Utilities<span class="caret"></span></div></section>

  <section class="pnl w-clip"><div class="pnl-body">
    <button class="big" style="width:54px"><svg><path d="M5 4h21v24H5z" fill="#b3a695" stroke="#333"/><path d="M10 2h11v5H10z" fill="#eee" stroke="#333"/><path d="M12 10h11l6 6v15H12z" fill="url(#gw)" stroke="#333"/><path d="M23 10v6h6" fill="#bbb" stroke="#333"/></svg>Paste<span class="caret caret-s"></span></button>
    <div class="rows">
      <button class="ibtn" style="width:22px" aria-label="Cut"><svg class="ic"><path d="m2 1 8 10M14 1 6 11" stroke="#eee" stroke-width="2"/><circle cx="3.500" cy="13" r="2.500" fill="none" stroke="#222"/><circle cx="12.500" cy="13" r="2.500" fill="none" stroke="#222"/></svg></button>
      <button class="ibtn" style="width:22px" aria-label="Copy clip"><svg class="ic"><path d="M1 1h9v11H1z" fill="#eee" stroke="#555"/><path d="M5 4h7l3 3v9H5z" fill="url(#gw)" stroke="#555"/></svg></button></div>
  </div><div class="pnl-title">Clipboard</div></section>

  <section class="pnl w-view border-end-0"><div class="pnl-body justify-content-center">
    <button class="big" style="width:54px"><svg><path d="M3 7h12v7h14v14H3z" fill="url(#gw)" stroke="#444"/></svg>Base<span class="caret caret-s"></span></button>
  </div><div class="pnl-title pe-3">View<span class="caret"></span><svg class="launch" width="8" height="8"><path d="m1 1 5 5M7 2v5H2" stroke="#fff" fill="none" stroke-width="1.300"/></svg></div></section>
</div>
<div class="filetabs d-flex">
  <button class="ftab">Start</button>
  <button class="ftab on">Skica_Pernik*<svg class="ms-auto" width="8" height="8"><path d="m1 1 6 6M7 1 1 7" stroke="#444" stroke-width="2"/></svg></button>
  <button class="plus-tab ms-1 mt-1" aria-label="New drawing"><svg width="9" height="9"><path d="M0 4.500h9M4.500 0v9" stroke="#ddd" stroke-width="2"/></svg></button>
</div>
<div class="rule"></div>
</header>

<main class="flex-fill d-flex">
  <aside class="side d-flex flex-column">
    <div class="palette"><svg width="10" height="4"><path d="M0 .5h10M0 3h10" stroke="#333" stroke-dasharray="1 1"/></svg><span>Sheet Set Manager</span></div>
    <div class="palette"><svg width="10" height="4"><path d="M0 .5h10M0 3h10" stroke="#333" stroke-dasharray="1 1"/></svg><span>Properties</span></div>
  </aside>
  <div class="flex-fill d-flex flex-column">
    <div class="model">
      <svg class="drawing" viewBox="0 0 1895 764" preserveAspectRatio="xMinYMin meet">
        <path d="M551 556 1006 278 1403 508" fill="none" stroke="#3b4890" stroke-width="11"/>
        <path d="M551 556 1006 278 1403 508" fill="none" stroke="#c62f55" stroke-width="7"/>
        <path d="m770 422 17-10M1197 389l17 10" stroke="#1e78d6" stroke-width="9"/>
        <path d="M544 549h14v14h-14zM999 271h14v14h-14zM1396 501h14v14h-14z" fill="#007fff" stroke="#4a6c96"/>
        <path d="M0 507.500h1527M1542 507.500h353M1534.500 0v500M1534.500 515v249" stroke="#fff"/>
        <path d="M1527.500 500.500h14v14h-14z" fill="none" stroke="#fff"/>
        <g fill="#c8505a"><path d="m883 123 8-3 53 120 10-5-3 35-27-22 11-4z"/><path d="m1684 388 8 5-73 111 9 7-32 17 2-36 12 6z"/><circle cx="878" cy="106" r="21.500"/><circle cx="1699" cy="373" r="21.500"/></g>
        <g fill="#fff"><circle cx="878" cy="106" r="14"/><circle cx="1699" cy="373" r="14"/></g>
        <g fill="#b8454f" font-size="19" text-anchor="middle"><text x="878" y="113">1</text><text x="1699" y="380">2</text></g>
      </svg>
      <div class="vlabel">[−][Top][2D Wireframe]</div>
      <div class="vpbtns"><svg width="10" height="10"><path d="M0 7h10v3H0z" fill="#e8e8f0"/></svg><svg width="10" height="10"><path d="M1 4h5v5H1zM3 1h6v6" fill="none" stroke="#e8e8f0" stroke-width="2"/></svg><svg width="10" height="10"><path d="m1 1 8 8M9 1 1 9" stroke="#e8e8f0" stroke-width="2.500"/></svg></div>
      <svg class="viewcube" width="130" height="140"><circle cx="65" cy="70" r="53.500" fill="none" stroke="#3d434e" stroke-width="13"/><path d="M39 44h52v52H39z" fill="#979b9f"/><path d="M49 54h32v32H49z" fill="#8b9195"/><g text-anchor="middle" font-weight="700"><text x="65" y="74" font-size="12" fill="#3e4347">TOP</text><g font-size="21" fill="#a3a7b0" style="font-family:'Liberation Sans',sans-serif"><text x="65" y="21" style="font-family:inherit">N</text><text x="65" y="133" style="font-family:inherit">S</text><text x="9" y="77" style="font-family:inherit">W</text><text x="121" y="77" style="font-family:inherit">E</text></g></g></svg>
      <button class="wcs">WCS<svg width="9" height="6"><path d="M0 3 4 1h1l4 2-4 2H4z" fill="none" stroke="#6a6f79"/></svg></button>
      <div class="navbar-v"><svg width="32" height="212" fill="none" stroke="#353b43"><circle cx="26" cy="5" r="3"/><path d="M5 30a11 11 0 0 1 11-11h11v11a11 11 0 0 1-22 0z"/><circle cx="16" cy="30" r="6"/><path d="m14 49 2 2 2-2M14 119l2 2 2-2M14 157l2 2 2-2" stroke-width="1.500"/><path d="M10 83q-2-8-6-10 2-3 6 2V65q2-2 3 0v7V63q2-2 3 0v9V63q2-2 3 0v9l2-8q3-1 3 1l-3 15-3 3z"/><path d="m5 91 15 15M20 90 5 106M5 95v-4h4M16 90h4v4M5 102v4h4"/><circle cx="21" cy="104" r="5"/><path d="m24 108 4 4" stroke-width="2"/><path d="M13 148v-14h-3l6-7 5 7h-3v14zM13 135q-10 2-8 6 10 8 22 0 2-4-7-6"/><path d="M5 170h6v6H5zM13 170h6v6h-6zM21 170h6v6h-6zM5 179h15v13H5z"/><path d="m10 181 6 4-6 4z" fill="#353b43"/><circle cx="26" cy="206" r="3"/></svg></div>
      <svg class="ucs" width="100" height="69"><g fill="none" stroke="#e4e8f0"><path d="M9.500 8v46M14 58.500h46M5.500 54.500h9v9h-9z"/><path d="M9.500 54v4.500h5"/></g><g fill="#e4e8f0" font-size="18" font-weight="300"><text x="12" y="3">Y</text><text x="64" y="57">X</text></g></svg>
      <div class="dyn">
        <input aria-label="Dynamic input" value="J"><span class="dyn-cursor"></span>
        <ul class="list-unstyled">
          <li class="sel"><svg><path d="M7 6v6M13 6v6M7 9h6" stroke="#6d9ad0" stroke-width="1.300"/></svg><span>J (JOIN)</span></li>
          <li><svg><path d="m6 15 4-4-2-2 5-3-1-3" fill="none" stroke="#6d8fc0"/></svg><span>JOG (DIMJOGGED)</span></li>
          <li><svg><path d="M3.500 2.500h12v12h-12z" fill="#ddd" stroke="#666"/><text x="5" y="13" font-size="12" font-weight="700" fill="#222">A</text><path d="M1.500 13.500h3v2h-3zM14.500 7.500h2v3h-2z" fill="#fff" stroke="#111"/></svg><span>JUSTIFYTEXT</span></li>
          <li><svg></svg><span>JPGOUT</span></li>
          <li><svg><path d="m2 9 5-5h5v10H2z" fill="#ddd" stroke="#667"/><path d="m8 7 4-2 5-3v9l-5 2v2l-4 1z" fill="#8fb3e8" stroke="#234a80"/></svg><span>JOGSECTION (SECTIONPLANEJOG)</span></li>
        </ul>
      </div>
    </div>
    <div class="cmd d-flex">
      <div class="cmd-grip d-flex flex-column align-items-center justify-content-between pt-1 pb-1">
        <svg width="17" height="5"><path d="M0 1h17M0 4h17" stroke="#aaa" stroke-width="2" stroke-dasharray="2 1"/></svg>
        <button aria-label="Close command line"><svg width="10" height="10"><path d="m1 1 8 8M9 1 1 9" stroke="#fff" stroke-width="2"/></svg></button>
        <button aria-label="Customize"><svg width="14" height="14"><path d="m5 5 8 8" stroke="#fff" stroke-width="3"/><path d="M1 2 4 5l2-2L4 0q4 0 4 4T4 8 0 5z" fill="#fff"/></svg></button>
      </div>
      <div class="flex-fill">
        <div class="cmd-hist">Command: Specify opposite corner or [Fence/WPolygon/CPolygon]:</div>
        <div class="cmd-in d-flex align-items-center"><svg width="15" height="14"><rect x=".5" y=".5" width="14" height="13" fill="#ddd" stroke="#888"/><path d="m3 4 3 3-3 3M8 10h4" stroke="#333" fill="none"/></svg><span class="caret caret-s" style="border-top-color:#777"></span><input class="flex-fill" aria-label="Command" placeholder="Type a command"></div>
      </div>
    </div>
  </div>
</main>
<footer>
  <div class="laytabs d-flex">
    <button class="ltab on">Model</button><button class="ltab">Layout1</button><button class="ltab">Layout2</button>
    <button class="plus-tab ms-1" style="height:17px" aria-label="New layout"><svg width="9" height="9"><path d="M0 4.500h9M4.500 0v9" stroke="#ddd" stroke-width="2"/></svg></button>
  </div>
  <div class="status d-flex justify-content-end">
    <div class="sg coord">3143.0430, 1627.3627, 0.0000</div>
    <button class="sg px-1">MODEL</button>
    <div class="sg"><button class="ibtn" aria-label="Grid"><svg class="ic" fill="none" stroke="#ccc"><path d="M2.500 1v14M5.500 1v14M8.500 1v14M11.500 1v14M0 4.500h15M0 8.500h15M0 12.500h15" stroke-dasharray="3 1"/></svg></button><button class="ibtn" aria-label="Snap"><svg class="ic"><path d="M1 2h14M1 5h14M1 8h14M1 11h14M1 14h14" stroke="#ccc" stroke-dasharray="1 2"/></svg></button><button class="ibtn sm" aria-label="Snap settings"><span class="caret"></span></button></div>
    <div class="sg"><button class="ibtn" aria-label="Infer"><svg class="ic"><path d="M3 10h5v5H3z" fill="#ccc"/><path d="M8 10V1h3v4H8" fill="none" stroke="#ccc"/></svg></button><button class="ibtn cell" aria-label="Dynamic input"><svg class="ic"><path d="M0 5h8M4 1v8" stroke="#3b9bf5" stroke-width="1.500"/><path d="M6 10h10v5H6z" fill="#2b84e6"/></svg></button>
    <button class="ibtn cell" aria-label="Ortho"><svg class="ic" fill="none" stroke="#ccc"><path d="M2.500 2v12H15M2.500 9.500h5V14"/></svg></button><button class="ibtn" aria-label="Polar"><svg class="ic" fill="none" stroke="#ccc"><circle cx="7" cy="8" r="6"/><path d="M7 8h9M7 8l5-6"/></svg></button><button class="ibtn sm" aria-label="Polar settings"><span class="caret"></span></button><button class="ibtn" aria-label="Isodraft"><svg class="ic"><path d="m0 1 16 14M8 0v16" stroke="#ccc"/></svg></button><button class="ibtn sm" aria-label="Isodraft settings"><span class="caret"></span></button>
    <button class="ibtn cell" aria-label="Tracking"><svg class="ic" fill="none" stroke="#ccc"><path d="M15 14.500H1L14 2"/><path d="m6 7 4 4" stroke-width="3"/></svg></button><button class="ibtn" aria-label="Object snap"><svg class="ic"><path d="M2.500 3.500h12v11h-12z" fill="none" stroke="#2b84e6" stroke-width="1.600"/><path d="M.5.5h4v4h-4z" fill="#053" stroke="#1a8b3c"/></svg></button><button class="ibtn sm" aria-label="Object snap settings"><span class="caret"></span></button>
    <button class="ibtn cell" aria-label="Lineweight"><svg class="ic"><path d="M0 1h16v2H0zM0 5h10v3H0zM10 5h5v2h-5zM0 10h16v1H0zM0 13h9v3H0z" fill="#3b93f0"/></svg></button><button class="ibtn cell" aria-label="Transparency"><svg class="ic"><path d="M1 1h14v14H1z" fill="#2b84e6"/><path d="M1 3h14M1 7h14M1 11h14" stroke="#8cc2ff" stroke-width="2" stroke-dasharray="2 2"/></svg></button><button class="ibtn cell" aria-label="Selection cycling"><svg class="ic"><path d="M0 4h7M3.500 0v8" stroke="#eee"/><path d="M4 5h9v9H4z" fill="none" stroke="#ddd"/><path d="M7 8h8v8H7z" fill="#8fbf7a"/></svg></button></div>
    <div class="sg"><button class="ibtn" aria-label="Dynamic UCS"><svg class="ic" fill="none" stroke="#3b93f0" stroke-width="1.500"><path d="M2 1v13h13M2 14 12 4"/><path d="m12 0-3 5h5l-3 4" stroke-width="2"/></svg></button></div>
    <div class="sg"><button class="ibtn" aria-label="Annotation visibility"><svg class="ic"><path d="m7 2 2 8 6 5H9l-3-3-3 3H0l5-5z" fill="#2b84e6"/><circle cx="11" cy="4" r="3" fill="none" stroke="#3b9bf5" stroke-width="1.500"/></svg></button><button class="ibtn" aria-label="Auto scale"><svg class="ic"><path d="m7 2 2 8 6 5H9l-2-3-3 3H0l5-5z" fill="#ccc"/><path d="m13 0-3 4h4l-3 3" fill="none" stroke="#ccc"/></svg></button><button class="ibtn" aria-label="Annotation"><svg class="ic"><path d="m8 0 2 9 6 6h-6l-2-3-2 3H0l6-6z" fill="#ccc"/></svg></button><button class="scale-btn">1:1<span class="caret"></span></button></div>
    <div class="sg"><button class="ibtn" aria-label="Workspace"><svg class="ic"><circle cx="8" cy="8" r="4" fill="none" stroke="#ddd" stroke-width="3"/><circle cx="8" cy="8" r="6" fill="none" stroke="#ddd" stroke-width="1.500" stroke-dasharray="2.500 2.200"/></svg></button><button class="ibtn sm" aria-label="Workspace list"><span class="caret"></span></button><button class="ibtn cell" aria-label="Monitor"><svg class="ic"><path d="M8 1v14M1 8h14" stroke="#ddd" stroke-width="2"/></svg></button></div>
    <div class="sg"><button class="ibtn" aria-label="Quick properties"><svg class="ic"><path d="M4.500 3.500h8v10h-8z" fill="none" stroke="#ccc"/><path d="M6 6h5M6 8.500h5M6 11h5" stroke="#ccc" stroke-dasharray="1 1"/></svg></button></div>
    <div class="sg"><button class="ibtn" aria-label="Lock UI"><svg class="ic"><path d="M6 11H1V2h13v4" fill="none" stroke="#ccc" stroke-width="1.500"/><path d="M7 9h6v6H7z" fill="#ccc"/><path d="M12 9V7h3v2" fill="none" stroke="#ccc"/></svg></button><button class="ibtn sm" aria-label="Lock list"><span class="caret"></span></button><button class="ibtn cell" aria-label="Isolate"><svg class="ic" fill="none" stroke="#ccc"><path d="M1 1h6v7H1zM7 10l4 5H4z"/><circle cx="12" cy="7" r="3"/></svg></button></div>
    <div class="sg"><button class="ibtn" aria-label="Graphics performance"><svg class="ic"><circle cx="8" cy="8" r="8" fill="#1673d6"/><path d="m6 11 5-6" stroke="#8cc2ff" stroke-width="1.500"/></svg></button></div>
    <div class="sg"><button class="ibtn" aria-label="Clean screen"><svg class="ic" fill="none" stroke="#ddd"><path d="M.5 2.500h15v11H.5z"/><path d="m9 7 4-3m-3 0h3v3M7 9l-4 3m0-3v3h3"/></svg></button><button class="ibtn" aria-label="Customization"><svg class="ic"><path d="M0 3h15M0 8h15M0 13h15" stroke="#ddd" stroke-width="2"/></svg></button></div>
  </div>
  <div class="taskbar d-flex align-items-stretch">
    <button class="tk sys" aria-label="Start"><svg viewBox="0 0 24 24"><path d="m4 6 7-1v7H4zM12 5l8-1v8h-8zM4 13h7v7l-7-1zM12 13h8v8l-8-1z" fill="#fff"/></svg></button>
    <button class="tk sys" aria-label="Search"><svg viewBox="0 0 24 24" fill="none" stroke="#fff" stroke-width="1.300"><circle cx="15" cy="9" r="5"/><path d="m11 13-7 7"/></svg></button>
    <button class="tk sys" aria-label="Task view"><svg viewBox="0 0 24 24" fill="none" stroke="#fff" stroke-width="1.200"><path d="M6.500 5.500h11v13h-11zM5 7.500H2.500v9H5M19 7.500h2.500v9H19"/></svg></button>
    <button class="tk" aria-label="Edge"><svg viewBox="0 0 24 24"><path d="M2 12C2 5 7 2 12 2c7 0 10 5 10 11H9c0 5 7 6 11 3v4c-7 4-15 1-15-6 0-3 2-5 4-6-4 0-6 2-7 4zm7-3h7c0-4-6-4-7 0z" fill="#1c7fd6"/></svg></button>
    <button class="tk run" aria-label="Explorer"><svg viewBox="0 0 24 24"><path d="M2 4h8l1 2h11v15H2z" fill="#fbdc7b"/><path d="M6 21v-7h12v7h-3v-4H9v4z" fill="#42a5c6"/></svg></button>
    <button class="tk" aria-label="Store"><svg viewBox="0 0 24 24"><path d="M2 7 22 6v15L4 22z" fill="#fff"/><path d="M7 6q1-5 5-5t4 5" stroke="#fff" fill="none" stroke-width="1.500"/><path d="M6 11h5v3H6zM12 10h5v4h-5zM6 15h5v4H6zM12 15h5v4h-5z" fill="#010206"/></svg></button>
    <button class="tk" aria-label="Access"><svg viewBox="0 0 24 24"><g fill="#a4373a"><path d="M13 4h10v16H13z" fill="#f3dcdc"/><use href="#office"/></g><path d="M13 9h10M13 13h10M13 17h10" stroke="#a4373a"/><text x="3" y="16" font-size="12" font-weight="700" fill="#fff">A</text></svg></button>
    <button class="tk" aria-label="OneNote"><svg viewBox="0 0 24 24"><g fill="#80397b"><path d="M13 4h10v16H13z" fill="#f0e0ef"/><use href="#office"/></g><path d="M13 7h8M13 10h8M13 13h8M13 16h8M20 4v16" stroke="#80397b"/><text x="2" y="16" font-size="12" font-weight="700" fill="#fff">N</text></svg></button>
    <button class="tk" aria-label="Excel"><svg viewBox="0 0 24 24"><g fill="#1e7145"><path d="M13 4h10v16H13z" fill="#fff"/><use href="#office"/></g><path d="M13 7h9M13 10h9M13 13h9M13 16h9M18 4v16" stroke="#1e7145"/><text x="3" y="16" font-size="12" font-weight="700" fill="#fff">X</text></svg></button>
    <button class="tk" aria-label="PowerPoint"><svg viewBox="0 0 24 24"><g fill="#d24726"><path d="M13 4h10v16H13z" fill="#fde6df"/><use href="#office"/></g><circle cx="17" cy="9" r="3" fill="#d24726"/><path d="M14 15h7M14 18h7" stroke="#d24726"/><text x="3" y="16" font-size="12" font-weight="700" fill="#fff">P</text></svg></button>
    <button class="tk" aria-label="Outlook"><svg viewBox="0 0 24 24"><g fill="#0072c6"><path d="M12 7h11v10H12z" fill="#fff"/><use href="#office"/></g><path d="m14 9 4 4 5-4" stroke="#0072c6" fill="none" stroke-width="1.500"/><text x="2" y="16" font-size="12" font-weight="700" fill="#fff">O</text></svg></button>
    <button class="tk run" aria-label="Word"><svg viewBox="0 0 24 24"><g fill="#2b579a"><path d="M13 3h10v18H13z" fill="#fff"/><use href="#office"/></g><path d="M13 6h8M13 9h8M13 12h8M13 15h8M13 18h8" stroke="#2b579a"/><text x="1" y="16" font-size="12" font-weight="700" fill="#fff">W</text></svg></button>
    <button class="tk run" aria-label="Chrome"><svg viewBox="0 0 24 24"><circle cx="11" cy="12" r="11" fill="#4caf50"/><path d="M11 12 1.500 6.500A11 11 0 0 1 20.500 6.500z" fill="#e0453a"/><path d="M11 12l9.500-5.500A11 11 0 0 1 11 23z" fill="#fbc116"/><circle cx="11" cy="12" r="5.500" fill="#fff"/><circle cx="11" cy="12" r="4" fill="#4285f4"/><path d="M13 12h11v12H13z" fill="#aaa"/><circle cx="18.500" cy="16" r="2.500" fill="#5b4a42"/><path d="M14 24q0-5 4.500-5t4.500 5z" fill="#222"/></svg></button>
    <button class="tk" aria-label="File"><svg viewBox="0 0 24 24"><path d="M4 1h12l4 4v18H4z" fill="#f5f5f5"/><path d="M16 1v4h4" fill="#ccc" stroke="#777" stroke-width=".5"/></svg></button>
    <button class="tk" aria-label="Notepad++"><svg viewBox="0 0 24 24"><path d="M2 2h18v21H2z" fill="#f3f3e6"/><path d="M3 12h16v10H3z" fill="#7cc53a"/><path d="M5 7v8M8 8v2m3-2v2M2 3h18" stroke="#333"/><path d="m13 13 8-12 2 1-7 12z" fill="#e5a22c"/></svg></button>
    <button class="tk" aria-label="Flower app"><svg viewBox="0 0 24 24"><path d="M4 10a8 8 0 1 1 16 0l-5 4H9z" fill="#1fe6e6"/><path d="M0 13q9-1 12 6 3-7 12-6-1 10-12 10T0 13z" fill="#1fe6e6"/><path d="M12 17V7M7 9l3 2 2-5 2 5 3-2-2 4H9z" stroke="#010206" fill="#010206"/></svg></button>
    <button class="tk" aria-label="AutoCAD launcher"><svg viewBox="0 0 24 24"><path d="M0 0h24v24H0z" fill="url(#gr)"/><path d="m11 2 8 15-6-2-8 2z" fill="#7d1010"/><path d="m11 2 2 13-8 2z" fill="#b51d18"/></svg></button>
    <button class="tk run" aria-label="Chat"><svg viewBox="0 0 24 24"><circle cx="12" cy="12" r="11" fill="#3c7dbf"/><ellipse cx="12" cy="11" rx="6.500" ry="5.500" fill="none" stroke="#fff" stroke-width="1.500"/><path d="m13 16 4 3-1-4" fill="#fff"/></svg></button>
    <button class="tk" aria-label="Photoshop"><svg viewBox="0 0 24 24"><path d="M2 1h20v19H2z" fill="#0a1340" stroke="#a9b6ef" stroke-width="1.500"/><text x="5" y="15" font-size="11" font-weight="700" fill="#b4c4ff">Ps</text></svg></button>
    <button class="tk" aria-label="Notepad"><svg viewBox="0 0 24 24"><path d="M7 2h14l2 18-6 2z" fill="#eee8d0"/><path d="M7 3h13l-5 19-13-4z" fill="url(#gt)"/></svg></button>
    <button class="tk run" aria-label="Calculator"><svg viewBox="0 0 24 24"><path d="M3 0h18v24H3z" fill="#fff"/><path d="M5 2h14v5H5z" fill="#010206"/><path d="M6 11h13M6 15h13M6 19h13" stroke="#010206" stroke-width="2" stroke-dasharray="3 2"/></svg></button>
    <button class="tk" aria-label="Paint"><svg viewBox="0 0 24 24"><path d="M1 13q1-8 10-8 11 0 10 8-1 4-6 3-3 0-2 3 0 3-4 3-8-1-8-9z" fill="#e2ebf2"/><circle cx="6" cy="11" r="2" fill="#4a90d9"/><circle cx="11" cy="9" r="2" fill="#4db35e"/><circle cx="6" cy="16" r="2" fill="#d94a4a"/><path d="m13 21 5-15 2 1-5 15z" fill="#cf9149"/><circle cx="20" cy="3" r="3" fill="#e8c08a"/></svg></button>
    <button class="tk" aria-label="Keyhole app"><svg viewBox="0 0 24 24"><circle cx="12" cy="7" r="7" fill="#1fe6e6"/><path d="M0 12q6-2 12 2 6-4 12-2-1 9-8 10l-4 2-4-2Q1 21 0 12z" fill="#1fe6e6"/><path d="M6 9h12" stroke="#010206"/><path d="m12 20-3-4h6z" fill="#010206"/></svg></button>
    <button class="tk" aria-label="FileZilla"><svg viewBox="0 0 24 24"><path d="M1 1h22v22H1z" fill="#b00d0d"/><text x="4" y="18" font-size="15" font-weight="700" font-style="italic" fill="#fff">Fz</text></svg></button>
    <button class="tk act run" aria-label="AutoCAD"><svg viewBox="0 0 24 24"><path d="M0 0h24v24H0z" fill="#fbe3df"/><text x="4" y="20" font-size="23" font-weight="700" fill="#ab2226">A</text></svg></button>
    <div class="tray d-flex align-items-center ms-auto">
      <button class="ibtn" aria-label="Hidden icons"><svg class="ic"><path d="m2 11 6-6 6 6" fill="none" stroke="#fff" stroke-width="1.300"/></svg></button>
      <button class="ibtn" aria-label="Avira"><svg class="ic"><path d="M0 0h16v16H0z" fill="#c8151d"/><path d="M3 9q0-6 6-6 4 2 4 7-3-3-5-1-2-2-5 0zM8 8l-2 5" fill="none" stroke="#fff" stroke-width="1.500"/></svg></button>
      <button class="ibtn" aria-label="Volume"><svg class="ic" fill="none" stroke="#fff"><path d="M0 6h3l4-4v12l-4-4H0zM9 6q2 2 0 4M11 4q4 4 0 8M13 2q6 6 0 12"/></svg></button>
      <button class="ibtn" aria-label="Network"><svg class="ic" fill="none" stroke="#fff"><path d="M3 3.500h12.500v8H3zM9 12v3M6 15h7M.5 1.500h4v4h-4z"/></svg></button>
      <button class="text-center ps-1 pe-2" style="line-height:17px">ENG<br>GA</button>
      <button class="ibtn ms-1 me-2" aria-label="Notifications"><svg class="ic"><path d="M.5 1.500h15v11h-5l-2 3-2-3h-6z" fill="none" stroke="#fff" stroke-width="1.200"/></svg></button>
      <span class="vr ms-2" style="height:40px"></span>
    </div>
  </div>
</footer>
</div>
<script src="https://cdn.jsdelivr.net/npm/bootstrap@5.3.0/dist/js/bootstrap.bundle.min.js"></script>
</body>
</html>
